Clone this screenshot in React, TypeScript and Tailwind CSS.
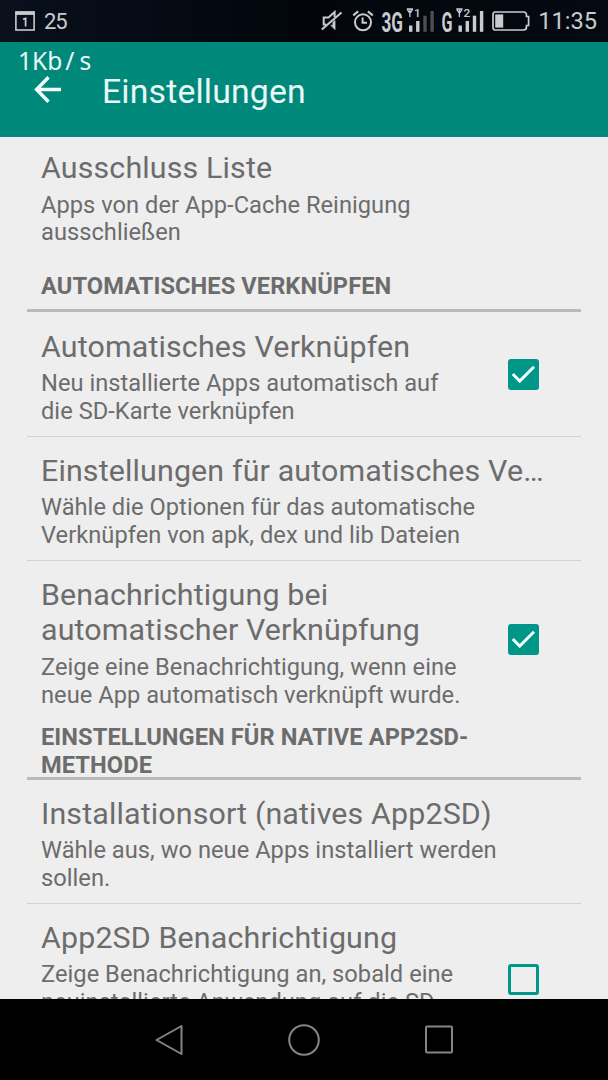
import React, { useState } from 'react';
import clsx from 'clsx';

interface PreferenceItem {
    title: string;
    summary: string;
    checkable?: boolean;
    checked?: boolean;
}

interface PreferenceSection {
    header?: string;
    items: PreferenceItem[];
}

const sections: PreferenceSection[] = [
    {
        items: [
            { title: 'Ausschluss Liste', summary: 'Apps von der App-Cache Reinigung\nausschließen' },
        ],
    },
    {
        header: 'AUTOMATISCHES VERKNÜPFEN',
        items: [
            {
                title: 'Automatisches Verknüpfen',
                summary: 'Neu installierte Apps automatisch auf\ndie SD-Karte verknüpfen',
                checkable: true,
                checked: true,
            },
            {
                title: 'Einstellungen für automatisches Ve…',
                summary: 'Wähle die Optionen für das automatische\nVerknüpfen von apk, dex und lib Dateien',
            },
            {
                title: 'Benachrichtigung bei\nautomatischer Verknüpfung',
                summary: 'Zeige eine Benachrichtigung, wenn eine\nneue App automatisch verknüpft wurde.',
                checkable: true,
                checked: true,
            },
        ],
    },
    {
        header: 'EINSTELLUNGEN FÜR NATIVE APP2SD-\nMETHODE',
        items: [
            {
                title: 'Installationsort (natives App2SD)',
                summary: 'Wähle aus, wo neue Apps installiert werden\nsollen.',
            },
            {
                title: 'App2SD Benachrichtigung',
                summary: 'Zeige Benachrichtigung an, sobald eine\nneuinstallierte Anwendung auf die SD-',
                checkable: true,
                checked: false,
            },
        ],
    },
];

const CalendarIcon = () => (
    <svg width="20" height="20" viewBox="0 0 20 20" fill="none" stroke="#c9cbce">
        <rect x="0.9" y="1" width="18.2" height="18" strokeWidth="1.6" />
        <path d="M0.5 2.2H19.5" strokeWidth="3.4" />
        <path d="M8 8.2L10.6 7.4V15.5" strokeWidth="1.7" />
    </svg>
);

const MuteIcon = () => (
    <svg width="22" height="22" viewBox="0 0 22 22" fill="none" stroke="#c9cbce" strokeWidth="2">
        <path d="M5 14.5H2.7V7.4H7.5L13.6 2V7" />
        <path d="M9.8 15.2L14 19.6V10.5L11.9 12.4V15.4Z" fill="#c9cbce" strokeWidth="0.8" />
        <path d="M0.8 19.5L20.5 2.5" strokeWidth="2.1" />
    </svg>
);

const AlarmIcon = () => (
    <svg width="22" height="22" viewBox="0 0 22 22" fill="none" stroke="#c9cbce" strokeWidth="2">
        <circle cx="11" cy="12.3" r="8" />
        <path d="M10.6 7.6V12.8H15" strokeWidth="2" />
        <path d="M1.2 5.4L6.2 1.4M20.8 5.4L15.8 1.4" />
    </svg>
);

interface SignalProps {
    network: string;
    sim: string;
    networkWidth: number;
    level: number;
}

const bars = [
    { left: 0, top: 18.5 },
    { left: 7.1, top: 14 },
    { left: 14.3, top: 8.7 },
    { left: 21.4, top: 4 },
];

const SignalIcon = ({ network, sim, networkWidth, level }: SignalProps) => {
    const x = networkWidth + 5.5;

    return (
        <svg className="overflow-visible" width={networkWidth + 30} height="26" viewBox={`0 0 ${networkWidth + 30} 26`} fill="#c9cbce">
            <text x="-0.5" y="24.7" fontFamily="Roboto, sans-serif" fontSize="28" fontWeight="700" textLength={networkWidth} lengthAdjust="spacingAndGlyphs">
                {network}
            </text>
            <path d={`M${x - 2.2} 2H${x + 4}M${x + 0.9} 2V10M${x - 1.8} 2.4L${x + 0.9} 6.4L${x + 3.6} 2.4`} stroke="#c9cbce" strokeWidth="1.3" fill="none" />
            <text x={x + 5} y="10" fontFamily="Roboto, sans-serif" fontSize="11.8" fontWeight="500">{sim}</text>
            {bars.map((bar, index) => (
                <rect
                    key={bar.left}
                    x={x + bar.left}
                    y={bar.top}
                    width="3.4"
                    height={24.8 - bar.top}
                    fill={index < level ? '#c9cbce' : '#4b4e52'}
                />
            ))}
        </svg>
    );
};

const BatteryIcon = () => (
    <svg width="38" height="20" viewBox="0 0 38 20" fill="none" stroke="#c9cbce" strokeWidth="1.7">
        <path d="M3 1H31.5Q34.5 1 34.5 4V5.5H36.6V14.5H34.5V16Q34.5 19 31.5 19H3Q1 19 1 16V4Q1 1 3 1Z" />
        <rect x="3.2" y="3.4" width="8" height="13.2" fill="#c9cbce" stroke="none" />
    </svg>
);

const StatusBar = () => (
    <div className="flex h-[42px] shrink-0 items-center bg-linear-to-r from-[#0a101c] via-[#02060c] to-[#050a12] pr-[11px] pl-[15px] text-[#c9cbce]">
        <CalendarIcon />
        <span className="ml-[9px] text-[22px] tracking-[-1.2px]">25</span>
        <div className="ml-auto flex items-center">
            <MuteIcon />
            <div className="ml-[9px]"><AlarmIcon /></div>
            <div className="mb-[2px] ml-[8px]"><SignalIcon network="3G" sim="1" networkWidth={21.5} level={2} /></div>
            <div className="mb-[2px] ml-[9px]"><SignalIcon network="G" sim="2" networkWidth={11} level={4} /></div>
            <div className="mt-[1px] ml-[9px]"><BatteryIcon /></div>
            <span className="mt-[2px] ml-[8px] text-[23.6px]">11:35</span>
        </div>
    </div>
);

const AppBar = () => (
    <div className="relative flex h-[94.5px] shrink-0 items-center bg-[#00897b] pl-[34px] text-[#e9f8f6]">
        {/* Network speed overlay */}
        <div className="absolute top-[2px] left-[18px] font-['Noto_Sans',sans-serif] text-[24.5px] leading-[34px]">
            1Kb<span className="mr-[5px] ml-[3px]">/</span>s
        </div>
        <button aria-label="Zurück">
            <svg width="28" height="27" viewBox="0 0 28 27" fill="none" stroke="#f4fffd" strokeWidth="3.4">
                <path d="M14.5 1.2L2.6 13.5L14.5 25.8M2.6 13.5H27" />
            </svg>
        </button>
        <h1 className="mt-[5px] ml-[40px] text-[33.8px] leading-[40px] tracking-[0.16px]">Einstellungen</h1>
    </div>
);

const Checkbox = ({ checked, onChange }: { checked: boolean; onChange: () => void }) => (
    <button
        role="checkbox"
        aria-checked={checked}
        onClick={onChange}
        className={clsx(
            'flex size-[31px] shrink-0 items-center justify-center rounded-[3px] border-[3px] border-[#009688]',
            checked && 'bg-[#009688]'
        )}
    >
        {checked && (
            <svg className="shrink-0" width="31" height="31" viewBox="0 0 31 31" fill="none" stroke="#effffd" strokeWidth="3">
                <path d="M4.8 15L11.7 22L26 7.7" />
            </svg>
        )}
    </button>
);

const Preference = ({ item }: { item: PreferenceItem }) => {
    const [checked, setChecked] = useState(Boolean(item.checked));
    const multiline = item.title.includes('\n');

    return (
        <div className="flex items-center pr-[42px] pl-[14px]">
            <div className="grow pt-[16px] pb-[10px] whitespace-pre">
                <div className="text-[30.4px] leading-[35.6px] tracking-[0.14px]">{item.title}</div>
                <div className="mt-[6px] text-[23.65px] leading-[27.7px] tracking-[0.04px]">{item.summary}</div>
            </div>
            {item.checkable && (
                <div className={clsx(multiline && '-mt-[2px]', !item.checked && 'mt-[28px]')}>
                    <Checkbox checked={checked} onChange={() => setChecked(!checked)} />
                </div>
            )}
        </div>
    );
};

const App: React.FC = () => {
    return (
        <div className="flex h-[1080px] w-[608px] flex-col overflow-hidden bg-[#eeeeee] font-[Roboto,sans-serif]">
            <StatusBar />
            <AppBar />

            {/* Preference list */}
            <div className="min-h-0 flex-1 overflow-hidden px-[27px] text-[#6c6c6c]">
                {sections.map((section, index) => (
                    <section key={index} className={clsx(index === 0 && '-mt-[2.5px]')}>
                        {section.header && (
                            <>
                                <h2
                                    className={clsx(
                                        'pl-[14px] text-[23.65px] leading-[27.7px] font-bold tracking-[0.07px] whitespace-pre',
                                        index === 1 ? 'pt-[16px] pb-[8px]' : 'pt-[5px]'
                                    )}
                                >
                                    {section.header}
                                </h2>
                                <div className={clsx('h-[3px] bg-[#b9b9b9]', index === 1 ? 'mb-[1px]' : '-mt-[3px]')} />
                            </>
                        )}
                        <div className="divide-y divide-[#d2d2d2]">
                            {section.items.map((item) => (
                                <Preference key={item.title} item={item} />
                            ))}
                        </div>
                    </section>
                ))}
            </div>

            {/* Navigation bar */}
            <nav className="flex h-[81px] shrink-0 items-center justify-center gap-[104px] bg-black">
                <svg width="32" height="32" viewBox="0 0 32 32" fill="none" stroke="#858585" strokeWidth="2" strokeLinejoin="round">
                    <path d="M29.5 2L4.5 16L29.5 30Z" />
                </svg>
                <svg width="32" height="32" viewBox="0 0 32 32" fill="none" stroke="#858585" strokeWidth="2">
                    <circle cx="16" cy="16" r="14.8" />
                </svg>
                <svg width="32" height="32" viewBox="0 0 32 32" fill="none" stroke="#858585" strokeWidth="2">
                    <rect x="2" y="2.5" width="26" height="26" rx="1" />
                </svg>
            </nav>
        </div>
    );
};

export default App;
